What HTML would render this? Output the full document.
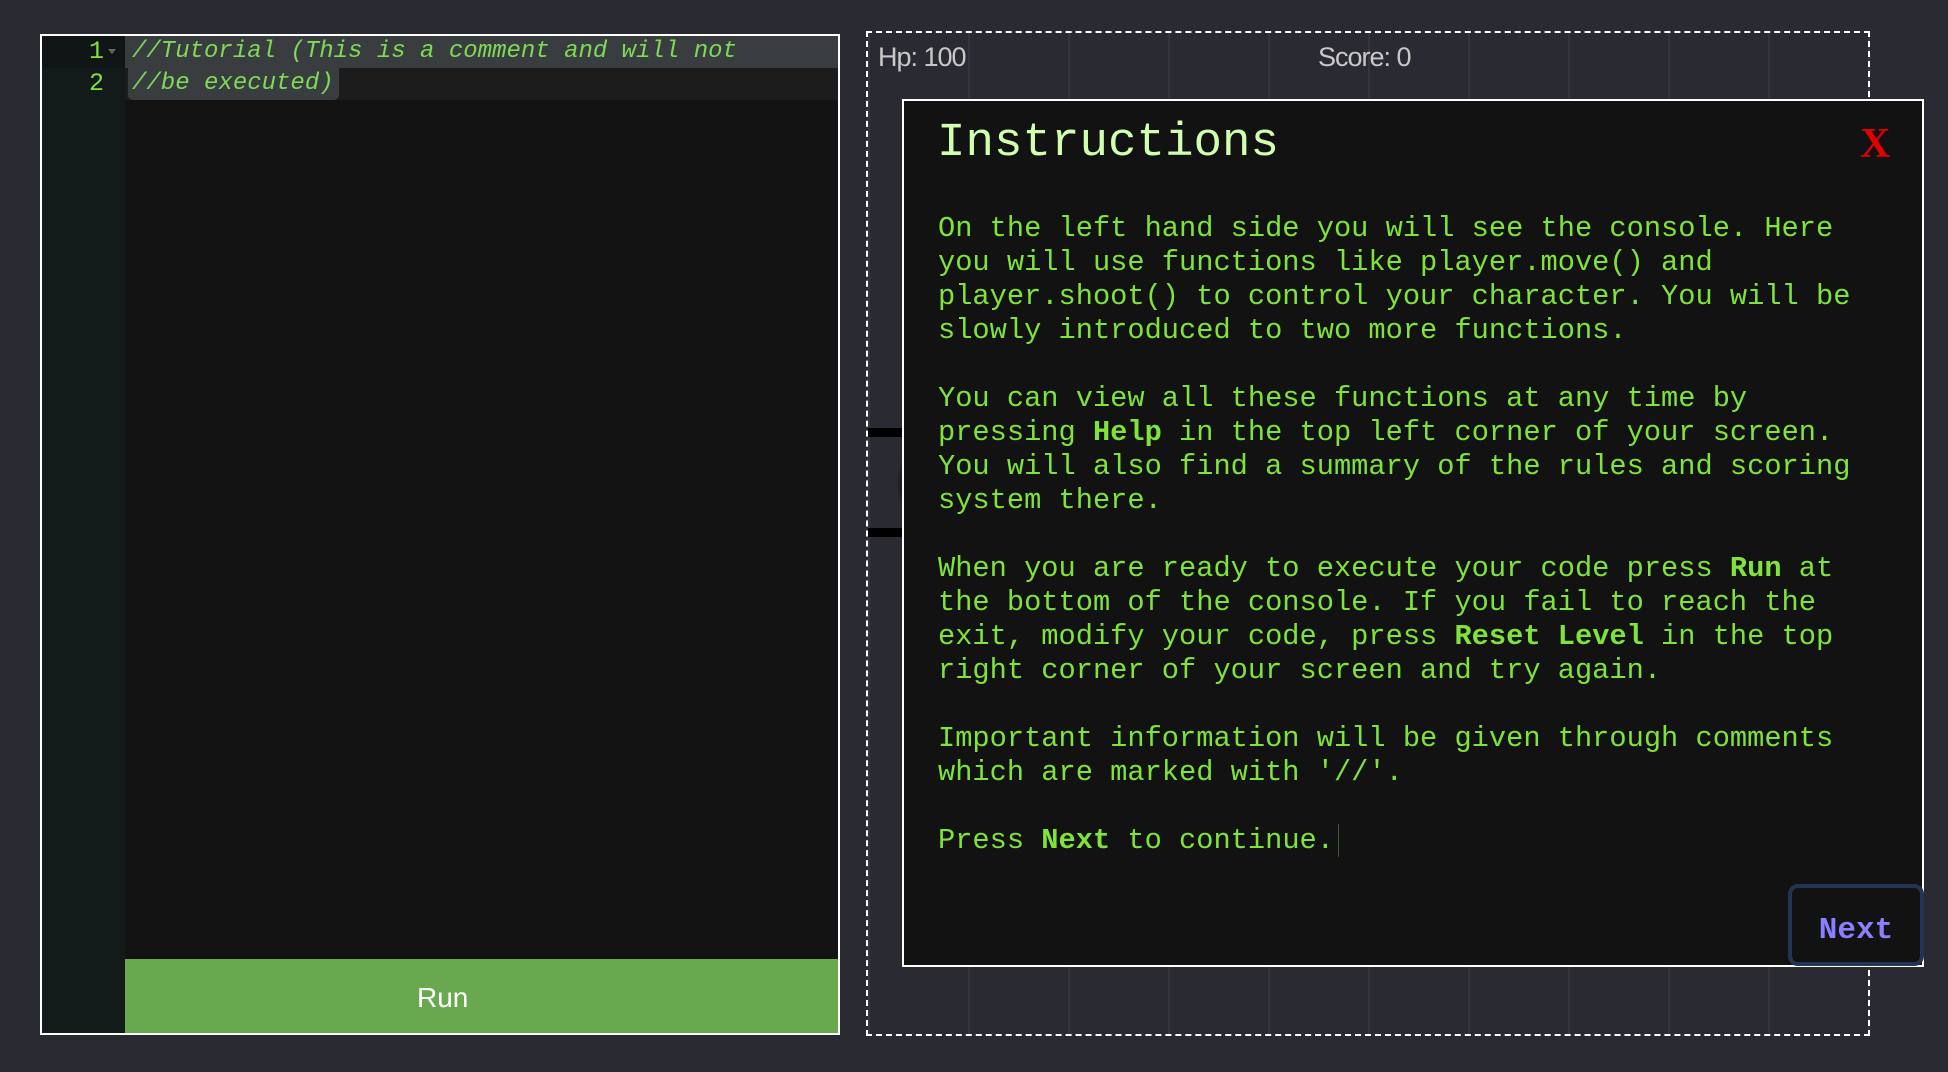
<!DOCTYPE html>
<html><head><meta charset="utf-8"><style>
html,body{margin:0;padding:0;width:1948px;height:1072px;background:#2a2a33;overflow:hidden;position:relative;font-family:"Liberation Mono",monospace}
.ed{position:absolute;left:40px;top:34px;width:796px;height:997px;border:2px solid #fff;background:#131313;box-sizing:content-box}
.gut{position:absolute;left:0;top:0;width:83px;height:100%;background:#131a1a}
.ln{position:absolute;left:0;width:62px;text-align:right;color:#7fe33a;font-size:25px;line-height:32px}
.code{position:absolute;left:90px;font-size:24px;line-height:32px;font-style:italic;color:#7ed957;white-space:pre}
.run{position:absolute;left:83px;top:923px;width:713px;height:74px;background:#68a84f;color:#fff;font-family:"Liberation Sans",sans-serif;font-size:28px;line-height:78px}
.game{position:absolute;left:866px;top:31px;width:1000px;height:1001px;border:2px dashed #fff;overflow:hidden;
background-image:linear-gradient(to right,rgba(255,255,255,0.05) 2px,transparent 2px);background-size:100px 100px;background-position:100px 0}
.hud{position:absolute;top:9px;color:#c8c8c8;font-family:"Liberation Sans",sans-serif;font-size:27px;letter-spacing:-1px}
.bar{position:absolute;left:0;width:40px;height:9px;background:#000}
.modal{position:absolute;left:902px;top:99px;width:1018px;height:864px;border:2px solid #fff;background:#121212}
.title{position:absolute;left:33px;top:14px;color:#d0ffb0;font-size:47.5px;line-height:56px}
.x{position:absolute;left:956px;top:18px;color:#e00000;font-family:"Liberation Serif",serif;font-size:42px;font-weight:bold;line-height:50px}
.txt{position:absolute;left:34px;top:111px;color:#7fe33a;font-size:28.7px;line-height:34px;white-space:pre}
.txt b{font-weight:bold}
.next{position:absolute;left:1788px;top:884px;width:136px;height:82px;border:4px solid #243454;border-radius:10px;background:#121212;color:#8a7fff;font-size:31px;font-weight:bold;text-align:center;line-height:86px;box-sizing:border-box}
</style></head><body>
<div class="ed">
 <div class="gut"></div>
 <div style="position:absolute;left:0;top:0;width:83px;height:32px;background:#101616"></div>
 <div style="position:absolute;left:83px;top:32px;width:713px;height:32px;background:#1c1c1c"></div>
 <div style="position:absolute;left:83px;top:0;width:713px;height:32px;background:#3a3d3f"></div>
 <div style="position:absolute;left:86px;top:32px;width:211px;height:32px;background:#3a3d3f;border-radius:0 0 5px 5px"></div>
 <div class="ln" style="top:0">1</div><div style="position:absolute;left:66px;top:13px;border:4px solid transparent;border-top:5px solid #666"></div>
 <div class="ln" style="top:32px">2</div>
 <div class="code" style="top:0">//Tutorial (This is a comment and will not</div>
 <div class="code" style="top:32px">//be executed)</div>
 <div class="run"><span style="position:absolute;left:292px">Run</span></div>
</div>
<div class="game">
 <div class="hud" style="left:10px">Hp: 100</div>
 <div class="hud" style="left:450px">Score: 0</div>
 <div class="bar" style="top:395px"></div>
 <div class="bar" style="top:495px"></div>
 <div style="position:absolute;left:28px;top:410px;width:60px;height:80px;border-radius:50%;background:radial-gradient(#000 40%,transparent 70%)"></div>
</div>
<div class="modal">
 <div class="title">Instructions</div>
 <div class="x">X</div>
 <div class="txt">On the left hand side you will see the console. Here
you will use functions like player.move() and
player.shoot() to control your character. You will be
slowly introduced to two more functions.

You can view all these functions at any time by
pressing <b>Help</b> in the top left corner of your screen.
You will also find a summary of the rules and scoring
system there.

When you are ready to execute your code press <b>Run</b> at
the bottom of the console. If you fail to reach the
exit, modify your code, press <b>Reset Level</b> in the top
right corner of your screen and try again.

Important information will be given through comments
which are marked with '//'.

Press <b>Next</b> to continue.<span style="border-left:1px solid #3a5a2a;margin-left:4px"> </span></div>
</div>
<div class="next">Next</div>
</body></html>
